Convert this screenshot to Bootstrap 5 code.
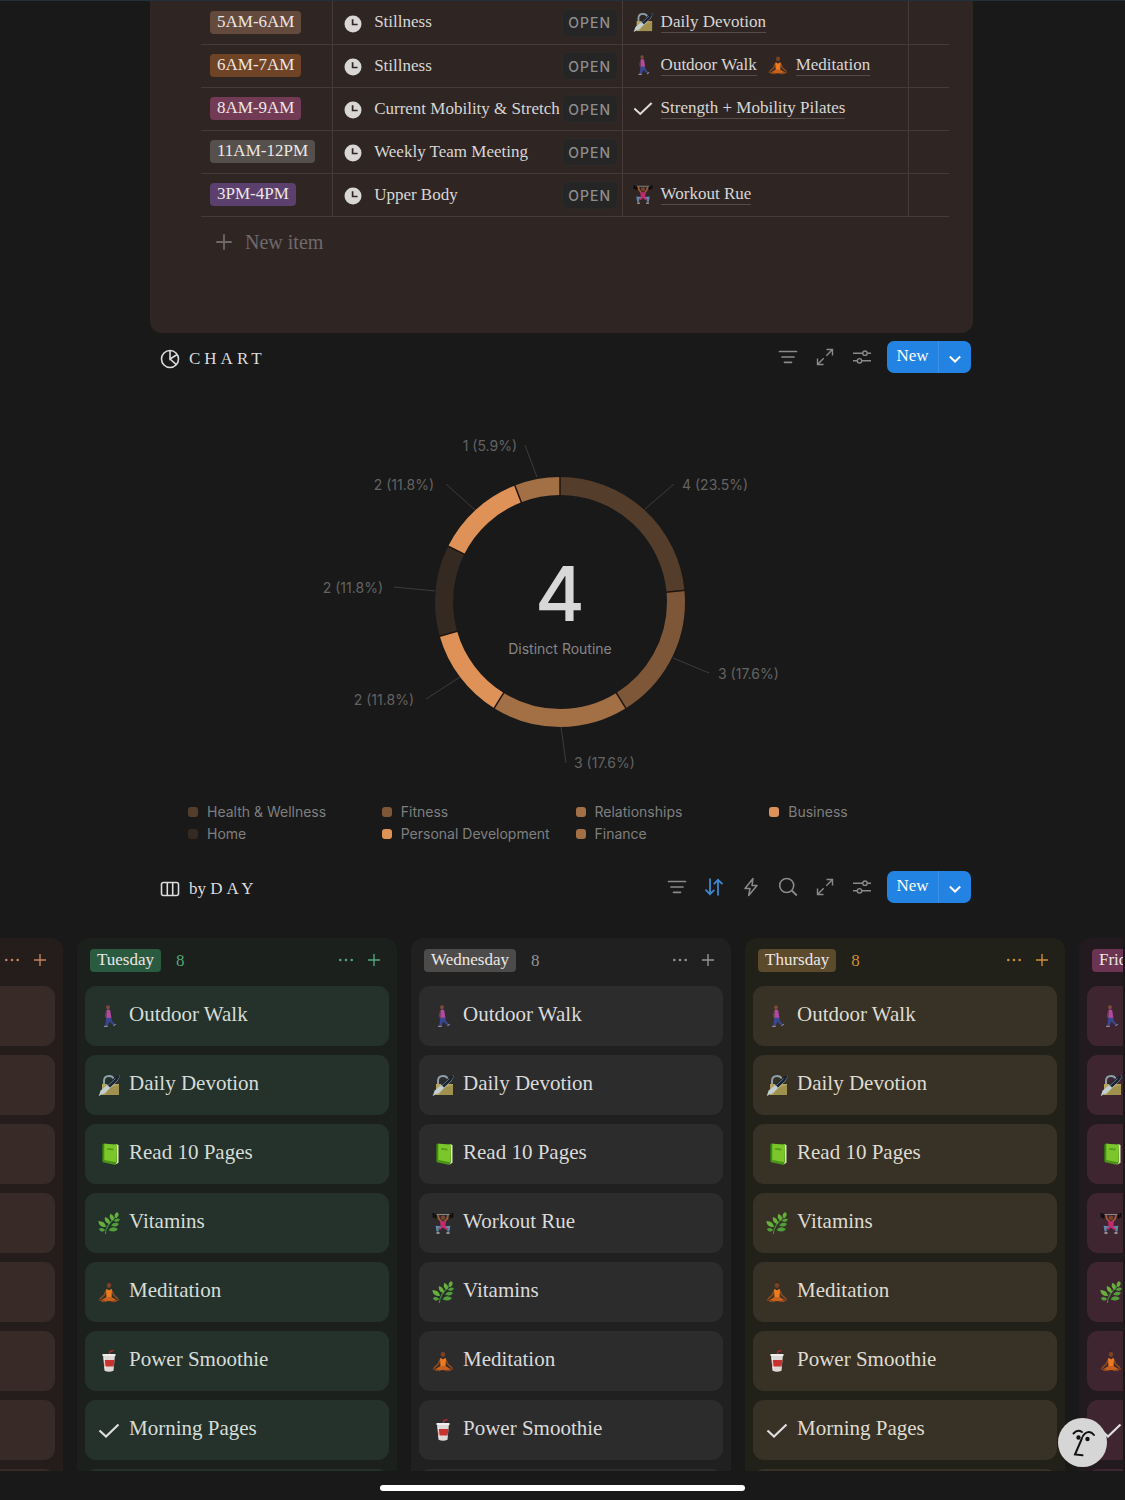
<!DOCTYPE html>
<html lang="en">
<head>
<meta charset="utf-8">
<meta name="viewport" content="width=device-width, initial-scale=1">
<title>Routine dashboard</title>
<link href="https://cdn.jsdelivr.net/npm/bootstrap@5.3.0/dist/css/bootstrap.min.css" rel="stylesheet">
<style>
:root{--serif:"Liberation Serif",serif;--sans:Inter,"Liberation Sans",sans-serif}
body{background:#191919;color:#d8d6d4;font-family:var(--serif);font-size:17px;line-height:23px}
a{color:inherit;text-decoration:none}
a:hover{color:#fff}
svg{display:block;flex:none}
.shell{height:100vh;border-top:1px solid #22303a}
.page-col{width:100%;max-width:825px;padding-right:2px}
.callout{background:#2f2624;border-radius:0 0 12px 12px;padding:0 24px 79px 51px}
/* schedule table */
.schedule{table-layout:fixed;width:100%;border-collapse:collapse}
.schedule td{height:43px;padding:0 0 1px;border-bottom:1px solid #453c39;border-right:1px solid #453c39}
.schedule td:last-child{border-right:0}
.schedule td:first-child{padding-left:9px}
.pill{display:inline-block;border-radius:4px;padding:0 7px;height:23px;line-height:21px;color:#ece7e4;white-space:nowrap}
.slot-name{padding-left:11px;padding-right:4px}
.slot-name svg{margin-top:4px;margin-right:12px}
.open-btn{font:500 14px/25px var(--sans);letter-spacing:1px;width:56px;height:28px;padding:0;color:#8f8d8c;background:#252525;border:1px solid #2b2a29;border-radius:7px;margin-top:2px}
.rel{gap:8px;padding-left:10px}
.rel + .rel{padding-left:11px}
.rel-text{border-bottom:1px solid #554b48;line-height:21px;white-space:nowrap}
.brown{background:#634a3d}.orange{background:#6f4325}.rose{background:#733a55}.stone{background:#56504c}.purple{background:#5b3f6c}
.new-item{font-size:20px;color:#70686a;gap:12px;padding:14px 0 0 14px;background:none;border:0}
/* section bars */
.section-bar{padding:0 2px 0 10px;height:33px}
.day-bar{margin-top:26px}
.view-title{font-size:17px;gap:9px;font-weight:400;line-height:23px;color:#dcdcdc;padding-top:3px}
.spaced{letter-spacing:4px}
.tool{width:37px;height:32px;background:none;border:0;color:#8a8a8a}
.tool.on{color:#3e87cf}
.new-btn{margin-left:7px}
.new-btn button{background:#2383e2;border:0;color:#fff;height:32px;padding:0 0 2px;line-height:28px}
.new-btn button:first-child{width:52px;border-radius:7px 0 0 7px;border-right:1px solid #3c92e6}
.new-btn button:last-child{width:32px;padding:2px 0 0;border-radius:0 7px 7px 0}
/* chart */
.chart{font-family:var(--sans);font-size:14px;margin:17px 0 0}
.chart svg{width:100%;height:auto}
.legend-row{font:14px/22px var(--sans);color:#7f7f7f;padding:0 10px 0 38px}
.legend-row li{gap:9px}
.swatch{width:10px;height:10px;border-radius:3px;flex:none}
/* board */
.board{min-height:0;gap:14px;margin:34px 2px 0 0}
.day{width:320px;flex:none;padding:0 8px;border-radius:12px 12px 0 0;background:var(--col)}
.day.tail{width:63px;padding-left:0;border-top-left-radius:0}
.day-head{height:48px;padding:11px 1px 14px 5px}
.day.tail .day-head{justify-content:flex-end;padding-left:0}
.day-head .pill{background:var(--pill)}
.count{color:var(--accent);margin-left:15px;line-height:21px}
.head-btn{background:none;border:0;padding:0;width:28px;flex:none;color:var(--accent)}
.routine{display:flex;align-items:center;gap:9px;height:60px;margin-bottom:9px;padding:0 13px;border-radius:11px;background:var(--tile);font-size:21px;line-height:24px;color:var(--ink);flex:none;white-space:nowrap}
.routine span{padding-bottom:4px}
.tail .routine{border-top-left-radius:0;border-bottom-left-radius:0}
.mon{--col:#241d1b;--tile:#382b27;--accent:#c4825c;--ink:#ddd}
.tue{--col:#1b201d;--tile:#25322b;--accent:#50a57c;--ink:#d5ddd8;--pill:#2a5a40}
.wed{--col:#202020;--tile:#2c2c2c;--accent:#939393;--ink:#dadada;--pill:#4c4b4a}
.thu{--col:#212019;--tile:#373225;--accent:#cf8d35;--ink:#dfdbd1;--pill:#5c4a2c}
.fri{--col:#231a1f;--tile:#3e2530;--accent:#c46a97;--ink:#e0d5da;--pill:#6b3453}
.foot{height:29px;flex:none}
.home-bar{width:365px;max-width:60%;height:6px;border-radius:3px;background:#fff}
.face{position:absolute;right:18px;bottom:33px;width:49px;height:49px;border-radius:50%;background:#d6d6d6;border:0;padding:0}
</style>
<script src="https://cdn.jsdelivr.net/npm/bootstrap@5.3.0/dist/js/bootstrap.bundle.min.js"></script>
</head>
<body>
<svg width="0" height="0" class="position-absolute" aria-hidden="true">
<defs>
<symbol id="clock" viewBox="0 0 18 18"><circle cx="9" cy="9" r="8.500" fill="#d9d7d5"/><path d="M8.600 4.300V9.500H13.600" fill="none" stroke="#2f2624" stroke-width="1.700"/></symbol>
<symbol id="walk" viewBox="0 0 22 22"><circle cx="10" cy="2.300" r="2" fill="#7a4a38"/><path d="M8.600 4.800q2.400-1 3.600.6l1.200 7.600-5.200.3z" fill="#b04ba2"/><path d="M8.600 6l-1 4 .6 3" stroke="#7c3b58" stroke-width="1.200" fill="none"/><path d="M8.200 12.800h5.200l.4 3 3.400 3.700-1.400 1.200-4.400-4.300-1.900 4.600H7.300z" fill="#3a4690"/><path d="M6 21.300h3.800M15.500 20.900l2.300-1.800" stroke="#8d8498" stroke-width="1.200"/></symbol>
<symbol id="lock" viewBox="0 0 22 22"><path d="M6 11V7Q6 2 11 2q4 0 5 3.500" fill="none" stroke="#8ba0a8" stroke-width="2"/><path d="M4 10h17v11H4z" fill="#b3a35f"/><path d="M11 14l10-3v10H7z" fill="#a0914f"/><path d="M21.300 1l.7 1-2.600 5L7.300 18.800.7 22l2-5.600z" fill="#c3ced2"/><path d="M21.300 1l.7 1-3 5-7 6.600-3-3 8.500-7.800z" fill="#1b2230"/><path d="M9.500 12l8-7.500" stroke="#78909a" stroke-width=".8"/></symbol>
<symbol id="book" viewBox="0 0 22 22"><path d="M4 1.200L6.500.8V19l-1.600.2L4 18z" fill="#2f6d14"/><path d="M5.500 18.500L18 21.300l2.500-1.500V2L18 1z" fill="#dfe6c4"/><path d="M5.500.6L19 1.800v17L17.500 22 5 19.200z" fill="#4b9418"/><path d="M6.300.7L19 1.800l-.6 17.400L6.300 17z" fill="#7cc52b"/><path d="M9 5l6.500.6v1.800L9 6.800z" fill="#569f1c"/></symbol>
<symbol id="herb" viewBox="0 0 22 22"><path d="M7.500 22q-.5-8 11-18" fill="none" stroke="#3e8b36" stroke-width="1.200"/><g fill="#68b03c"><path d="M19 0q3.800 2.500-.7 6.300-3.800-2.800.7-6.300zM12.500 1.800q5 2.500 2.700 6.900-5.200-1.700-2.700-6.900zM7 5q5.700 2 4.800 7.200Q5.700 10.700 7 5zM.3 9q7 .1 7.700 6Q1 15.500.3 9z"/></g><g fill="#519f3b"><path d="M22 7.300q-1.500 4-6.300 1.800 2-4 6.300-1.800zM21 11.800q-2 4.500-7.900 1.600 2.700-4.500 7.900-1.600zM20 17q-3.200 4.500-9.500 1.200 3.300-5 9.500-1.200zM.8 17.300q3.200-2.800 6.400.7-3.700 3.700-6.400-.7z"/></g></symbol>
<symbol id="lotus" viewBox="0 0 22 22"><circle cx="11" cy="1.500" r="1.300" fill="#3a241b"/><ellipse cx="11" cy="4.300" rx="2.200" ry="2.600" fill="#7a4325"/><path d="M8.200 9.500L6.300 14 2 17.800M13.800 9.500l1.900 4.500 4.300 3.800" fill="none" stroke="#8c4b22" stroke-width="1.600"/><path d="M8 8.300h1.500q1.500 2 3 0H14l-.5 8.700h-5z" fill="#ee7a20"/><path d="M8.500 16h5l5.500 3.300-1 1.700-7-1-7 1-1-1.700z" fill="#c9611d"/><path d="M.8 18.600L8 20.800M21.200 18.600L14 20.800" stroke="#84451d" stroke-width="1.400"/></symbol>
<symbol id="cup" viewBox="0 0 22 22"><path d="M11 5l1-3.500L15.500.3" stroke="#b02d31" stroke-width="1.400" fill="none"/><path d="M5 4.500h12l-1.500 16.300q-4.500 1.800-9 0z" fill="#ded9d7"/><path d="M5.600 10h10.900l-.9 6.500H6.400z" fill="#c5342f"/><path d="M4.500 4h13v2h-13z" fill="#f0eeee"/><path d="M6 7.500l1.300 11" stroke="#fff" stroke-width=".8"/></symbol>
<symbol id="tick" viewBox="0 0 22 22"><path d="M1.500 11.500l6.500 6L20.500 5.500" fill="none" stroke="#dedddc" stroke-width="2.200"/></symbol>
<symbol id="lift" viewBox="0 0 22 22"><path d="M1 2.500h20" stroke="#9ba0a3" stroke-width=".8"/><path d="M1.500 1v4.500M3.500 1.800v4.700M20.500 1v4.500M18.500 1.800v4.700" stroke="#0d0d0d" stroke-width="1.800"/><path d="M6 2.800l.7 3.700 2.600 3M16 2.800l-.7 3.700-2.600 3" stroke="#a35c38" stroke-width="1.700" fill="none"/><circle cx="11" cy="5.800" r="2.200" fill="#7b4430"/><path d="M8 9h6l-.8 7H8.800z" fill="#c22a6c"/><path d="M9 15.500l-4-.5.800 4.500M13 15.500l4-.5-.8 4.500" stroke="#5f89aa" stroke-width="2.300" fill="none"/><path d="M7 17l2.500-1.200M15 17l-2.500-1.200" stroke="#c22a6c" stroke-width="2"/><path d="M4.500 21h3M14.500 21h3" stroke="#bbaeb0" stroke-width="1.500"/></symbol>
<symbol id="plus" viewBox="0 0 14 14"><path d="M7 1v12M1 7h12" stroke="currentColor" stroke-width="1.400"/></symbol>
<symbol id="dots" viewBox="0 0 16 16"><g fill="currentColor"><circle cx="2.300" cy="8" r="1.300"/><circle cx="8" cy="8" r="1.300"/><circle cx="13.700" cy="8" r="1.300"/></g></symbol>
<symbol id="filter" viewBox="0 0 20 20"><path d="M1.500 4.500h17M4 10h12M6.500 15.300h7" stroke="currentColor" stroke-width="1.700" stroke-linecap="round"/></symbol>
<symbol id="expand" viewBox="0 0 20 20"><path d="M11.500 2.500h6v6M17.300 2.700l-6 6M8.500 17.500h-6v-6M2.700 17.300l6-6" fill="none" stroke="currentColor" stroke-width="1.400"/></symbol>
<symbol id="sliders" viewBox="0 0 20 20"><g fill="none" stroke="currentColor" stroke-width="1.400"><path d="M1 6.200h9.700M15.300 6.200H19M1 13.800h4.200M9.800 13.800H19"/><circle cx="13" cy="6.200" r="2.200"/><circle cx="7.500" cy="13.800" r="2.200"/></g></symbol>
<symbol id="sort" viewBox="0 0 20 20"><path d="M6 1.500v15.500M1.500 12.700L6 17.200l4.300-4.300M14 18.500V3M9.800 7.200L14 2.800l4.500 4.400" fill="none" stroke="currentColor" stroke-width="1.800"/></symbol>
<symbol id="bolt" viewBox="0 0 20 20"><path d="M12 1.500L4 11.500h5l-1.300 7 8.300-10h-5z" fill="none" stroke="currentColor" stroke-width="1.500" stroke-linejoin="round"/></symbol>
<symbol id="search" viewBox="0 0 20 20"><circle cx="8.700" cy="8.500" r="7" fill="none" stroke="currentColor" stroke-width="1.600"/><path d="M13.800 13.500l5 5" stroke="currentColor" stroke-width="1.800"/></symbol>
<symbol id="chev" viewBox="0 0 14 14"><path d="M1.800 5.500l5.200 5 5.200-5" fill="none" stroke="#fff" stroke-width="2"/></symbol>
</defs>
</svg>

<div class="shell d-flex flex-column overflow-hidden position-relative">
<main class="page-col mx-auto">
  <section class="callout">
    <table class="schedule">
      <colgroup><col style="width:17.600%"><col style="width:38.700%"><col style="width:38.300%"><col></colgroup>
      <tbody>
      <tr><td><span class="pill brown">5AM-6AM</span></td>
        <td><div class="slot-name d-flex align-items-center"><svg width="18" height="18"><use href="#clock"/></svg><span class="flex-fill text-nowrap">Stillness</span><button class="open-btn">OPEN</button></div></td>
        <td><div class="d-flex"><a href="#" class="rel d-flex align-items-center"><svg width="20" height="20"><use href="#lock"/></svg><span class="rel-text">Daily Devotion</span></a></div></td><td></td></tr>
      <tr><td><span class="pill orange">6AM-7AM</span></td>
        <td><div class="slot-name d-flex align-items-center"><svg width="18" height="18"><use href="#clock"/></svg><span class="flex-fill text-nowrap">Stillness</span><button class="open-btn">OPEN</button></div></td>
        <td><div class="d-flex"><a href="#" class="rel d-flex align-items-center"><svg width="20" height="20"><use href="#walk"/></svg><span class="rel-text">Outdoor Walk</span></a><a href="#" class="rel d-flex align-items-center"><svg width="20" height="20"><use href="#lotus"/></svg><span class="rel-text">Meditation</span></a></div></td><td></td></tr>
      <tr><td><span class="pill rose">8AM-9AM</span></td>
        <td><div class="slot-name d-flex align-items-center"><svg width="18" height="18"><use href="#clock"/></svg><span class="flex-fill text-nowrap">Current Mobility &amp; Stretch</span><button class="open-btn">OPEN</button></div></td>
        <td><div class="d-flex"><a href="#" class="rel d-flex align-items-center"><svg width="20" height="20"><use href="#tick"/></svg><span class="rel-text">Strength + Mobility Pilates</span></a></div></td><td></td></tr>
      <tr><td><span class="pill stone">11AM-12PM</span></td>
        <td><div class="slot-name d-flex align-items-center"><svg width="18" height="18"><use href="#clock"/></svg><span class="flex-fill text-nowrap">Weekly Team Meeting</span><button class="open-btn">OPEN</button></div></td>
        <td></td><td></td></tr>
      <tr><td><span class="pill purple">3PM-4PM</span></td>
        <td><div class="slot-name d-flex align-items-center"><svg width="18" height="18"><use href="#clock"/></svg><span class="flex-fill text-nowrap">Upper Body</span><button class="open-btn">OPEN</button></div></td>
        <td><div class="d-flex"><a href="#" class="rel d-flex align-items-center"><svg width="20" height="20"><use href="#lift"/></svg><span class="rel-text">Workout Rue</span></a></div></td><td></td></tr>
      </tbody>
    </table>
    <button class="new-item d-flex align-items-center"><svg width="18" height="18"><use href="#plus"/></svg>New item</button>
  </section>

  <header class="section-bar d-flex align-items-center mt-2">
    <h2 class="view-title d-flex align-items-center mb-0 me-auto"><svg width="20" height="20" viewBox="0 0 20 20" fill="none" stroke="currentColor" stroke-width="1.600"><circle cx="10" cy="10" r="8.500"/><path d="M10 1.500V10l7.200-4.500M10 10l6.300 5.700"/></svg><span class="spaced">CHART</span></h2>
    <button class="tool d-flex align-items-center justify-content-center" aria-label="Filter"><svg width="20" height="20"><use href="#filter"/></svg></button>
    <button class="tool d-flex align-items-center justify-content-center" aria-label="Expand"><svg width="20" height="20"><use href="#expand"/></svg></button>
    <button class="tool d-flex align-items-center justify-content-center" aria-label="Settings"><svg width="20" height="20"><use href="#sliders"/></svg></button>
    <div class="new-btn d-flex"><button>New</button><button class="d-flex align-items-center justify-content-center" aria-label="More"><svg width="14" height="14"><use href="#chev"/></svg></button></div>
  </header>

  <figure class="chart">
    <svg viewBox="0 0 823 410" role="img" aria-label="Distinct Routine by area">
      <g transform="translate(410 211)">
        <g fill="none" stroke-width="18" transform="rotate(-90)">
          <circle r="116" pathLength="17" stroke="#553d2b" stroke-dasharray="4 13"/>
          <circle r="116" pathLength="17" stroke="#7e5739" stroke-dasharray="3 14" stroke-dashoffset="-4"/>
          <circle r="116" pathLength="17" stroke="#a36f45" stroke-dasharray="3 14" stroke-dashoffset="-7"/>
          <circle r="116" pathLength="17" stroke="#de9257" stroke-dasharray="2 15" stroke-dashoffset="-10"/>
          <circle r="116" pathLength="17" stroke="#352a22" stroke-dasharray="2 15" stroke-dashoffset="-12"/>
          <circle r="116" pathLength="17" stroke="#de9257" stroke-dasharray="2 15" stroke-dashoffset="-14"/>
          <circle r="116" pathLength="17" stroke="#a36f45" stroke-dasharray="1 16" stroke-dashoffset="-16"/>
        </g>
        <g stroke="#20150e" stroke-width="1.500">
          <path d="M0-106V-126"/><path d="M0-106V-126" transform="rotate(84.700)"/><path d="M0-106V-126" transform="rotate(148.200)"/><path d="M0-106V-126" transform="rotate(211.800)"/><path d="M0-106V-126" transform="rotate(254.100)"/><path d="M0-106V-126" transform="rotate(296.500)"/><path d="M0-106V-126" transform="rotate(338.800)"/>
        </g>
        <path d="M85-93L114-118M113 56L149 71M1 125L6 161M-100 75L-134 97M-125-11L-166-15M-85-92L-114-118M-23-125L-35-157" stroke="#3d3c3b" fill="none"/>
        <g fill="#636363">
          <text x="122" y="-112">4 (23.5%)</text><text x="158" y="77">3 (17.6%)</text><text x="14" y="166">3 (17.6%)</text>
          <text x="-146" y="103" text-anchor="end">2 (11.8%)</text><text x="-177" y="-9" text-anchor="end">2 (11.8%)</text><text x="-126" y="-112" text-anchor="end">2 (11.8%)</text><text x="-43" y="-151" text-anchor="end">1 (5.9%)</text>
        </g>
        <text y="19" text-anchor="middle" font-size="76" font-weight="500" fill="#d8d8d8">4</text>
        <text y="52" text-anchor="middle" fill="#868686">Distinct Routine</text>
      </g>
    </svg>
  </figure>
  <ul class="legend-row list-unstyled mb-0"><li class="d-block"><ul class="row row-cols-4 gx-0 list-unstyled">
    <li class="d-flex align-items-center"><span class="swatch" style="background:#553d2b"></span>Health &amp; Wellness</li>
    <li class="d-flex align-items-center"><span class="swatch" style="background:#7e5739"></span>Fitness</li>
    <li class="d-flex align-items-center"><span class="swatch" style="background:#a36f45"></span>Relationships</li>
    <li class="d-flex align-items-center"><span class="swatch" style="background:#de9257"></span>Business</li>
    <li class="d-flex align-items-center"><span class="swatch" style="background:#352a22"></span>Home</li>
    <li class="d-flex align-items-center"><span class="swatch" style="background:#de9257"></span>Personal Development</li>
    <li class="d-flex align-items-center"><span class="swatch" style="background:#a36f45"></span>Finance</li>
  </ul></li></ul>

  <header class="section-bar day-bar d-flex align-items-center">
    <h2 class="view-title d-flex align-items-center mb-0 me-auto"><svg width="20" height="20" viewBox="0 0 20 20" fill="none" stroke="currentColor" stroke-width="1.600"><rect x="1.500" y="3.500" width="17" height="13" rx="2"/><path d="M7.300 3.500v13M12.700 3.500v13"/></svg><span>by <span class="spaced">DAY</span></span></h2>
    <button class="tool d-flex align-items-center justify-content-center" aria-label="Filter"><svg width="20" height="20"><use href="#filter"/></svg></button>
    <button class="tool on d-flex align-items-center justify-content-center" aria-label="Sort"><svg width="20" height="20"><use href="#sort"/></svg></button>
    <button class="tool d-flex align-items-center justify-content-center" aria-label="Automations"><svg width="20" height="20"><use href="#bolt"/></svg></button>
    <button class="tool d-flex align-items-center justify-content-center" aria-label="Search"><svg width="20" height="20"><use href="#search"/></svg></button>
    <button class="tool d-flex align-items-center justify-content-center" aria-label="Expand"><svg width="20" height="20"><use href="#expand"/></svg></button>
    <button class="tool d-flex align-items-center justify-content-center" aria-label="Settings"><svg width="20" height="20"><use href="#sliders"/></svg></button>
    <div class="new-btn d-flex"><button>New</button><button class="d-flex align-items-center justify-content-center" aria-label="More"><svg width="14" height="14"><use href="#chev"/></svg></button></div>
  </header>
</main>

<section class="board d-flex flex-fill overflow-hidden">
  <div class="day tail mon">
    <div class="day-head d-flex align-items-center"><button class="head-btn d-flex justify-content-center" aria-label="Options"><svg width="16" height="16"><use href="#dots"/></svg></button><button class="head-btn d-flex justify-content-center" aria-label="Add"><svg width="14" height="14"><use href="#plus"/></svg></button></div>
    <div class="routine"></div><div class="routine"></div><div class="routine"></div><div class="routine"></div><div class="routine"></div><div class="routine"></div><div class="routine"></div><div class="routine"></div>
  </div>
  <div class="day tue">
    <div class="day-head d-flex align-items-center"><span class="pill">Tuesday</span><span class="count me-auto">8</span><button class="head-btn d-flex justify-content-center" aria-label="Options"><svg width="16" height="16"><use href="#dots"/></svg></button><button class="head-btn d-flex justify-content-center" aria-label="Add"><svg width="14" height="14"><use href="#plus"/></svg></button></div>
    <a href="#" class="routine"><svg width="22" height="22"><use href="#walk"/></svg><span>Outdoor Walk</span></a>
    <a href="#" class="routine"><svg width="22" height="22"><use href="#lock"/></svg><span>Daily Devotion</span></a>
    <a href="#" class="routine"><svg width="22" height="22"><use href="#book"/></svg><span>Read 10 Pages</span></a>
    <a href="#" class="routine"><svg width="22" height="22"><use href="#herb"/></svg><span>Vitamins</span></a>
    <a href="#" class="routine"><svg width="22" height="22"><use href="#lotus"/></svg><span>Meditation</span></a>
    <a href="#" class="routine"><svg width="22" height="22"><use href="#cup"/></svg><span>Power Smoothie</span></a>
    <a href="#" class="routine"><svg width="22" height="22"><use href="#tick"/></svg><span>Morning Pages</span></a>
    <div class="routine"></div>
  </div>
  <div class="day wed">
    <div class="day-head d-flex align-items-center"><span class="pill">Wednesday</span><span class="count me-auto">8</span><button class="head-btn d-flex justify-content-center" aria-label="Options"><svg width="16" height="16"><use href="#dots"/></svg></button><button class="head-btn d-flex justify-content-center" aria-label="Add"><svg width="14" height="14"><use href="#plus"/></svg></button></div>
    <a href="#" class="routine"><svg width="22" height="22"><use href="#walk"/></svg><span>Outdoor Walk</span></a>
    <a href="#" class="routine"><svg width="22" height="22"><use href="#lock"/></svg><span>Daily Devotion</span></a>
    <a href="#" class="routine"><svg width="22" height="22"><use href="#book"/></svg><span>Read 10 Pages</span></a>
    <a href="#" class="routine"><svg width="22" height="22"><use href="#lift"/></svg><span>Workout Rue</span></a>
    <a href="#" class="routine"><svg width="22" height="22"><use href="#herb"/></svg><span>Vitamins</span></a>
    <a href="#" class="routine"><svg width="22" height="22"><use href="#lotus"/></svg><span>Meditation</span></a>
    <a href="#" class="routine"><svg width="22" height="22"><use href="#cup"/></svg><span>Power Smoothie</span></a>
    <div class="routine"></div>
  </div>
  <div class="day thu">
    <div class="day-head d-flex align-items-center"><span class="pill">Thursday</span><span class="count me-auto">8</span><button class="head-btn d-flex justify-content-center" aria-label="Options"><svg width="16" height="16"><use href="#dots"/></svg></button><button class="head-btn d-flex justify-content-center" aria-label="Add"><svg width="14" height="14"><use href="#plus"/></svg></button></div>
    <a href="#" class="routine"><svg width="22" height="22"><use href="#walk"/></svg><span>Outdoor Walk</span></a>
    <a href="#" class="routine"><svg width="22" height="22"><use href="#lock"/></svg><span>Daily Devotion</span></a>
    <a href="#" class="routine"><svg width="22" height="22"><use href="#book"/></svg><span>Read 10 Pages</span></a>
    <a href="#" class="routine"><svg width="22" height="22"><use href="#herb"/></svg><span>Vitamins</span></a>
    <a href="#" class="routine"><svg width="22" height="22"><use href="#lotus"/></svg><span>Meditation</span></a>
    <a href="#" class="routine"><svg width="22" height="22"><use href="#cup"/></svg><span>Power Smoothie</span></a>
    <a href="#" class="routine"><svg width="22" height="22"><use href="#tick"/></svg><span>Morning Pages</span></a>
    <div class="routine"></div>
  </div>
  <div class="day fri">
    <div class="day-head d-flex align-items-center"><span class="pill">Friday</span></div>
    <a href="#" class="routine" aria-label="Outdoor Walk"><svg width="22" height="22"><use href="#walk"/></svg></a>
    <a href="#" class="routine" aria-label="Daily Devotion"><svg width="22" height="22"><use href="#lock"/></svg></a>
    <a href="#" class="routine" aria-label="Read 10 Pages"><svg width="22" height="22"><use href="#book"/></svg></a>
    <a href="#" class="routine" aria-label="Workout Rue"><svg width="22" height="22"><use href="#lift"/></svg></a>
    <a href="#" class="routine" aria-label="Vitamins"><svg width="22" height="22"><use href="#herb"/></svg></a>
    <a href="#" class="routine" aria-label="Meditation"><svg width="22" height="22"><use href="#lotus"/></svg></a>
    <a href="#" class="routine" aria-label="Morning Pages"><svg width="22" height="22"><use href="#tick"/></svg></a>
    <div class="routine"></div>
  </div>
</section>
<footer class="foot d-flex align-items-center justify-content-center pt-1"><div class="home-bar"></div></footer>
<button class="face" aria-label="Assistant"><svg width="49" height="49" viewBox="0 0 49 49" fill="none" stroke="#111" stroke-width="2" stroke-linecap="round"><path d="M15.500 15.500q4-4.500 8.500-1.500M36 17q-4-5-9-1.500-2.500 2-3.500 6L17 36.500l7.500.8"/><circle cx="20.500" cy="19.500" r="1.200" fill="#111"/><circle cx="29.500" cy="21" r="1.200" fill="#111"/></svg></button>
</div>
</body>
</html>
